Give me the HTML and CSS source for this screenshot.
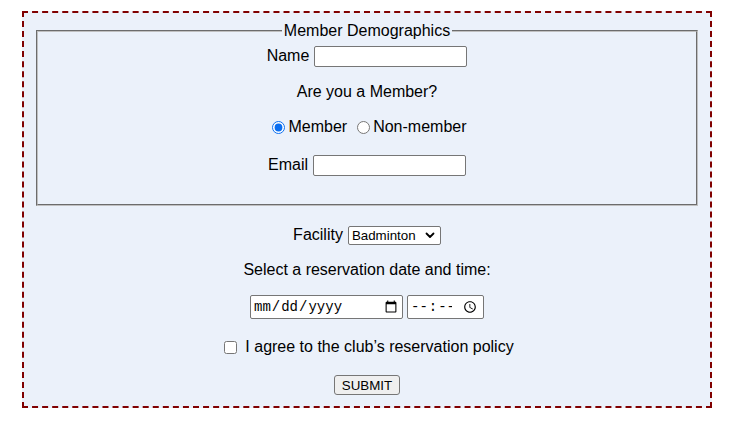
FILE: index.html
```html
<!DOCTYPE html>
<html lang="en">
<head>
    <meta charset="UTF-8">
    <meta name="viewport" content="width=device-width, initial-scale=1.0">
    <title>Club Reservation</title>
    <link rel="stylesheet" href="styles.css">
</head>
<body>
    <form class="reservation">
        <fieldset class="demographics">
            <legend>Member Demographics</legend>
            <div class="row">
                <label for="name">Name</label>
                <input type="text" id="name" class="text-field">
            </div>
            <div class="row row-gap">Are you a Member?</div>
            <div class="row row-gap-sm">
                <input type="radio" name="member" id="member" checked>
                <label for="member">Member</label>
                <input type="radio" name="member" id="nonmember" class="radio-second">
                <label for="nonmember">Non-member</label>
            </div>
            <div class="row row-gap-lg">
                <label for="email">Email</label>
                <input type="email" id="email" class="text-field">
            </div>
        </fieldset>

        <div class="row facility-row">
            <label for="facility">Facility</label>
            <span class="select-wrap">
                <select id="facility" class="facility">
                    <option>Badminton</option>
                    <option>Tennis</option>
                    <option>Squash</option>
                </select>
                <svg class="chevron" width="10" height="7" viewBox="0 0 10 7">
                    <path d="M1.5 1.5 L5 5 L8.5 1.5" fill="none" stroke="#000" stroke-width="1.8" stroke-linecap="round" stroke-linejoin="round"/>
                </svg>
            </span>
        </div>
        <div class="row row-gap-sm">Select a reservation date and time:</div>
        <div class="row date-row">
            <input type="date" class="date-field">
            <input type="time" class="time-field">
        </div>
        <div class="row check-row">
            <input type="checkbox" id="agree">
            <label for="agree">I agree to the club’s reservation policy</label>
        </div>
        <div class="row submit-row">
            <button type="submit" class="submit">SUBMIT</button>
        </div>
    </form>
</body>
</html>
```

FILE: styles.css
```css
body {
    margin: 0;
    font-family: "Liberation Sans", Arial, sans-serif;
    font-size: 16px;
    color: #000;
    background-color: #fff;
}
.reservation {
    box-sizing: border-box;
    width: 690px;
    margin: 11px 0 0 22px;
    padding: 9px 12px 10px;
    border: 2px dashed #800000;
    background-color: #ebf1fa;
    text-align: center;
}
.demographics {
    margin: 0;
    padding: 5px 12px 28px;
    border: 2px groove #c0c0c0;
}
.demographics legend {
    margin: 0 auto;
    padding: 0 2px;
    line-height: 18px;
}
.row {
    display: flex;
    align-items: center;
    justify-content: center;
    height: 22px;
}
.row-gap {
    margin-top: 14px;
}
.row-gap-sm {
    margin-top: 13px;
}
.row-gap-lg {
    margin-top: 16px;
}
.text-field {
    box-sizing: border-box;
    width: 153px;
    height: 21px;
    margin: 0 0 0 5px;
    border: 1px solid #767676;
    border-radius: 2px;
    background: #fff;
}
input[type="radio"] {
    width: 13px;
    height: 13px;
    margin: 0 3px 0 5px;
    accent-color: #0a6ef0;
}
.radio-second {
    margin-left: 10px !important;
}
.facility-row {
    margin-top: 18px;
}
.select-wrap {
    position: relative;
    display: inline-block;
    height: 19px;
    margin-left: 5px;
}
.facility {
    box-sizing: border-box;
    width: 93px;
    height: 19px;
    padding: 0 0 0 3px;
    font-family: "Liberation Sans", Arial, sans-serif;
    font-size: 13.33px;
    color: #000;
    border: 1px solid #767676;
    border-radius: 2px;
    background-color: #fff;
    appearance: none;
    -webkit-appearance: none;
}
.chevron {
    position: absolute;
    right: 6px;
    top: 6px;
    pointer-events: none;
}
.date-row {
    height: 24px;
    margin-top: 14px;
}
.date-field,
.time-field {
    box-sizing: border-box;
    height: 24px;
    font-family: "Liberation Mono", "Courier New", monospace;
    font-size: 14px;
    border: 1px solid #767676;
    border-radius: 2px;
    background: #fff;
    padding: 1px 2px;
}
.date-field {
    width: 153px;
}
.time-field {
    width: 77px;
    margin-left: 4px;
}
.check-row {
    margin-top: 17px;
}
input[type="checkbox"] {
    width: 13px;
    height: 13px;
    margin: 0 8px 0 4px;
}
.submit-row {
    margin-top: 16px;
}
.submit {
    box-sizing: border-box;
    height: 20px;
    padding: 0 7px;
    font-family: "Liberation Sans", Arial, sans-serif;
    font-size: 13.33px;
    color: #000;
    background-color: #efefef;
    border: 1px solid #767676;
    border-radius: 3px;
}
```
